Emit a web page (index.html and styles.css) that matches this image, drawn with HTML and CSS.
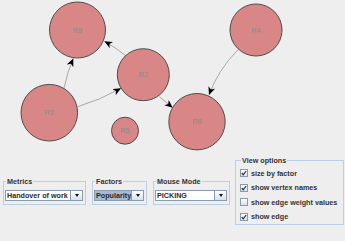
FILE: index.html
```html
<!DOCTYPE html>
<html>
<head>
<meta charset="utf-8">
<link rel="stylesheet" href="styles.css">
</head>
<body>
<div class="app">
  <svg class="graph" width="345" height="152" viewBox="0 0 345 152">
    <defs>
      <marker id="arr" markerUnits="userSpaceOnUse" markerWidth="9" markerHeight="8" refX="8" refY="3.5" orient="auto">
        <path d="M0,0 L8,3.5 L0,7 L2.2,3.5 z" fill="#000"/>
      </marker>
    </defs>
    <g class="edges" fill="none" stroke="#a8a8a8" stroke-width="1">
      <path d="M64 88 Q67 73 73.3 58.5" marker-end="url(#arr)"/>
      <path d="M77.7 106.7 Q100 100 121 88.3" marker-end="url(#arr)"/>
      <path d="M125.7 55.7 Q115 47 104.3 41.3" marker-end="url(#arr)"/>
      <path d="M159.3 96.7 L172.7 107.7" marker-end="url(#arr)"/>
      <path d="M237.7 50 Q218 70 209 95" marker-end="url(#arr)"/>
    </g>
    <g class="nodes" fill="#d98686" stroke="#4d4d4d" stroke-width="1">
      <circle cx="77.5" cy="30" r="28"/>
      <circle cx="143.3" cy="74.7" r="26"/>
      <circle cx="49.3" cy="112.7" r="28.3"/>
      <circle cx="125" cy="130.7" r="13.5"/>
      <circle cx="197" cy="121.7" r="28.2"/>
      <circle cx="256" cy="30" r="26"/>
    </g>
    <g class="labels" fill="#8c8c8c" text-anchor="middle">
      <text x="77.5" y="32.7">R9</text>
      <text x="143.3" y="77.4">R2</text>
      <text x="49.3" y="115.4">R1</text>
      <text x="125" y="133.4">R5</text>
      <text x="197" y="124.4">R8</text>
      <text x="256" y="32.7">R4</text>
    </g>
  </svg>
  <div class="controls">
    <fieldset class="group g-metrics">
      <legend>Metrics</legend>
      <div class="combo"><span class="combo-text">Handover of work</span><span class="combo-btn"><span class="tri"></span></span></div>
    </fieldset>
    <fieldset class="group g-factors">
      <legend>Factors</legend>
      <div class="combo combo-sel"><span class="combo-text">Popularity</span><span class="combo-btn"><span class="tri"></span></span></div>
    </fieldset>
    <fieldset class="group g-mouse">
      <legend>Mouse Mode</legend>
      <div class="combo"><span class="combo-text">PICKING</span><span class="combo-btn"><span class="tri"></span></span></div>
    </fieldset>
    <fieldset class="group g-view">
      <legend>View options</legend>
      <div class="check"><span class="box on"><svg width="6" height="6" viewBox="0 0 6 6"><path d="M0.8 3.2 L2.2 4.8 L5.2 1" fill="none" stroke="#2a2a2a" stroke-width="1.2"/></svg></span><span>size by factor</span></div>
      <div class="check"><span class="box on"><svg width="6" height="6" viewBox="0 0 6 6"><path d="M0.8 3.2 L2.2 4.8 L5.2 1" fill="none" stroke="#2a2a2a" stroke-width="1.2"/></svg></span><span>show vertex names</span></div>
      <div class="check"><span class="box"></span><span>show edge weight values</span></div>
      <div class="check"><span class="box on"><svg width="6" height="6" viewBox="0 0 6 6"><path d="M0.8 3.2 L2.2 4.8 L5.2 1" fill="none" stroke="#2a2a2a" stroke-width="1.2"/></svg></span><span>show edge</span></div>
    </fieldset>
  </div>
</div>
</body>
</html>
```
FILE: styles.css
```css
* { box-sizing: border-box; }
html, body {
  margin: 0;
  padding: 0;
  background: #eeeeee;
  width: 345px;
  height: 241px;
  overflow: hidden;
}
body {
  font-family: "Liberation Sans", Arial, sans-serif;
  font-weight: bold;
  font-size: 7.2px;
  color: #333;
}
.app {
  display: flex;
  flex-direction: column;
}
.graph {
  display: block;
}
.labels text {
  font-family: "Liberation Sans", Arial, sans-serif;
  font-weight: normal;
  font-size: 7.6px;
}
.controls {
  height: 77px;
  display: flex;
  align-items: center;
  gap: 6px;
  padding-left: 3px;
}
.group {
  margin: 0;
  border: 1px solid #bccfe2;
  min-width: 0;
}
.group legend {
  padding: 0 1px;
  margin-left: 1px;
  line-height: 9px;
  font-size: 7.2px;
  color: #333;
}
.g-metrics { width: 83px; padding: 4px 2px 3px 1px; }
.g-factors { width: 55px; padding: 4px 2px 3px 1px; }
.g-mouse { width: 77px; padding: 4px 2px 3px 1px; }
.g-view {
  width: 109px;
  margin-left: -1px;
  padding: 1px 2px 0 4px;
}
.g-view legend { margin-left: 1px; }
.combo {
  display: flex;
  height: 11px;
  border: 1px solid #8a9bb0;
  background: #fff;
}
.combo-text {
  flex: 1;
  overflow: hidden;
  white-space: nowrap;
  line-height: 9px;
  padding-left: 1px;
  color: #2a2a2a;
}
.combo-sel .combo-text {
  background: #a6bbd0;
}
.combo-btn {
  width: 12px;
  flex: none;
  border-left: 1px solid #8a9bb0;
  background: linear-gradient(#ffffff, #d3e0ee);
  display: flex;
  align-items: center;
  justify-content: center;
}
.tri {
  width: 0;
  height: 0;
  border-left: 2.5px solid transparent;
  border-right: 2.5px solid transparent;
  border-top: 3px solid #111;
}
.check {
  display: flex;
  align-items: center;
  height: 14.4px;
  gap: 3px;
  white-space: nowrap;
}
.box {
  width: 8px;
  height: 8px;
  flex: none;
  border: 1px solid #8a9bb0;
  background: linear-gradient(#ffffff, #d6e2ef);
  display: flex;
  align-items: center;
  justify-content: center;
}
```
